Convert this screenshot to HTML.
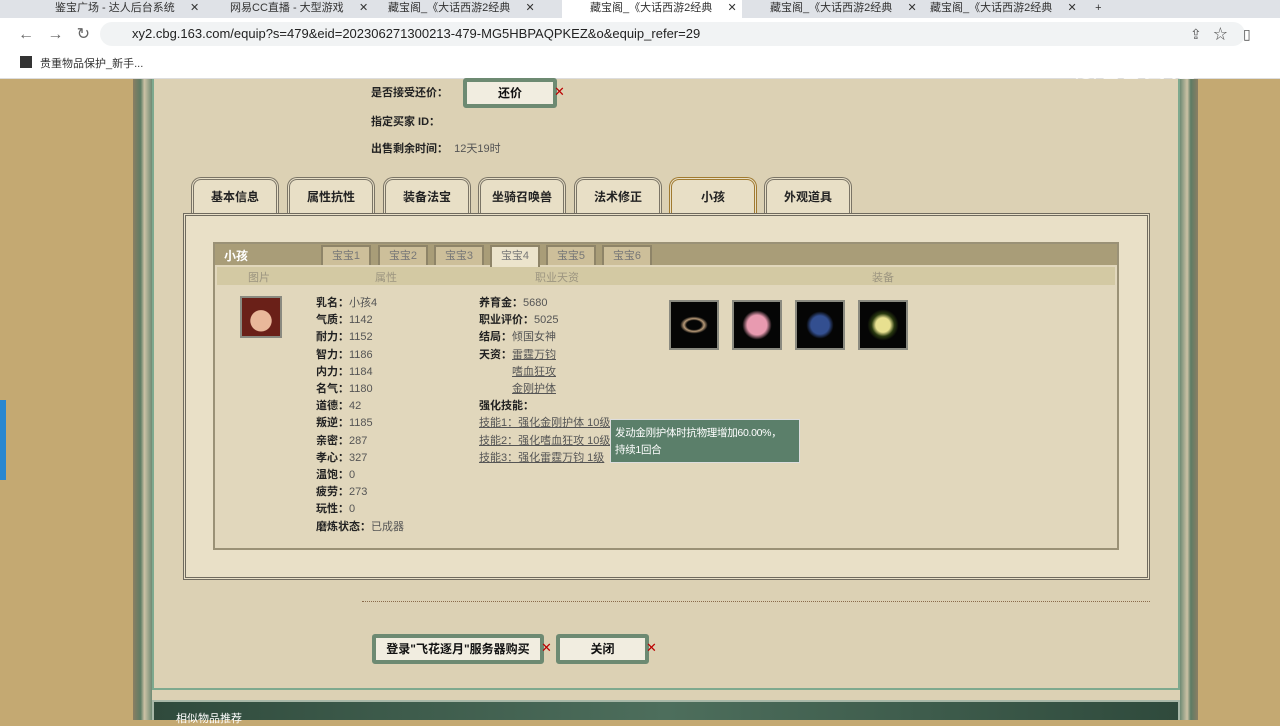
<!DOCTYPE html>
<html><head><meta charset="utf-8"><style>
*{margin:0;padding:0;box-sizing:border-box}
body{width:1280px;height:720px;overflow:hidden;position:relative;font-family:"Liberation Sans","Noto Sans CJK SC",sans-serif;font-size:11px;color:#333;background:#c4a972}
.abs{position:absolute}
.tabbar{left:0;top:0;width:1280px;height:18px;background:#dfe2e7}
.btab{top:2px;height:16px;font-size:11px;color:#333;line-height:12px;padding-left:30px;white-space:nowrap}
.addr{left:0;top:18px;width:1280px;height:30px;background:#fff}
.url{left:100px;top:22px;width:1145px;height:24px;background:#f1f3f4;border-radius:12px;font-size:13px;color:#222;line-height:24px;padding-left:32px}
.bm{left:0;top:48px;width:1280px;height:31px;background:#fff;border-bottom:1px solid #ddd}
.page{left:152px;top:79px;width:1028px;height:641px;background:#dcd1b4}
.tab{top:177px;height:36px;width:88px;border:3px double #7a7466;border-bottom:none;border-radius:10px 10px 0 0;background:#e8dfc6;text-align:center;line-height:34px;font-size:12px;color:#222;font-weight:bold}
.lbl{font-size:11px;color:#222;line-height:17.2px}
.lbl b{color:#222}
.lbl span{color:#555}
.u{text-decoration:underline;color:#666}
.eq{top:300px;width:50px;height:50px;background:#050505;border:2px solid #8a8a80}
.btn{height:30px;background:#f1ede0;border:4px solid #6d8a72;border-radius:3px;text-align:center;line-height:22px;font-size:12px;color:#111;font-weight:bold}
.st{top:245px;height:20px;width:50px;background:#cdbf9a;border:2px solid #8e8468;border-bottom:none;text-align:center;line-height:18px;color:#777;font-size:11px}
</style></head><body>
<div class="abs" style="left:0;top:400px;width:6px;height:80px;background:#2a87cf"></div>
<div class="abs tabbar"></div>
<div class="abs btab" style="left:25px">鉴宝广场 - 达人后台系统 &nbsp;&nbsp;&nbsp;&nbsp;✕</div>
<div class="abs btab" style="left:200px">网易CC直播 - 大型游戏 &nbsp;&nbsp;&nbsp;&nbsp;✕</div>
<div class="abs btab" style="left:358px">藏宝阁_《大话西游2经典 &nbsp;&nbsp;&nbsp;&nbsp;✕</div>
<div class="abs" style="left:562px;top:0;width:180px;height:18px;background:#fff"></div>
<div class="abs btab" style="left:560px">藏宝阁_《大话西游2经典 &nbsp;&nbsp;&nbsp;&nbsp;✕</div>
<div class="abs btab" style="left:740px">藏宝阁_《大话西游2经典 &nbsp;&nbsp;&nbsp;&nbsp;✕</div>
<div class="abs btab" style="left:900px">藏宝阁_《大话西游2经典 &nbsp;&nbsp;&nbsp;&nbsp;✕ &nbsp;&nbsp;&nbsp;&nbsp;&nbsp;+</div>
<div class="abs addr"></div>
<div class="abs" style="left:18px;top:24px;font-size:16px;color:#666">←&nbsp;&nbsp; →&nbsp;&nbsp; ↻</div>
<div class="abs url">xy2.cbg.163.com/equip?s=479&amp;eid=202306271300213-479-MG5HBPAQPKEZ&amp;o&amp;equip_refer=29</div>
<div class="abs" style="left:1190px;top:24px;font-size:14px;color:#555">⇪&nbsp;&nbsp; ☆&nbsp;&nbsp;&nbsp; ▯</div>
<div class="abs bm"></div>
<div class="abs" style="left:20px;top:56px;width:12px;height:12px;background:#333"></div>
<div class="abs" style="left:40px;top:55px;font-size:11px;color:#333">贵重物品保护_新手...</div>
<div class="abs" style="left:1072px;top:50px;font-size:28px;color:#fff;font-weight:bold;opacity:.85">◎CC直播</div>

<div class="abs" style="left:133px;top:79px;width:19px;height:641px;background:linear-gradient(90deg,#8a7e63,#5d7c64 40%,#ccc2a5 60%,#6f8a74)"></div>
<div class="abs" style="left:1180px;top:79px;width:18px;height:641px;background:linear-gradient(90deg,#6f8a74,#ccc2a5 40%,#5d7c64 60%,#8a7e63)"></div>
<div class="abs page"></div>
<div class="abs" style="left:152px;top:79px;width:1028px;height:611px;border:2px solid #7ea98e;border-top:none"></div>

<div class="abs lbl" style="left:371px;top:85px"><b>是否接受还价：</b></div>
<div class="abs btn" style="left:463px;top:78px;width:94px">还价</div>
<div class="abs" style="left:554px;top:84px;color:#b00;font-size:13px">✕</div>
<div class="abs lbl" style="left:371px;top:114px"><b>指定买家 ID：</b></div>
<div class="abs lbl" style="left:371px;top:141px"><b>出售剩余时间：</b><span>&nbsp;&nbsp;12天19时</span></div>

<div class="abs tab" style="left:191px">基本信息</div>
<div class="abs tab" style="left:287px">属性抗性</div>
<div class="abs tab" style="left:383px">装备法宝</div>
<div class="abs tab" style="left:478px">坐骑召唤兽</div>
<div class="abs tab" style="left:574px">法术修正</div>
<div class="abs tab" style="left:669px;border-color:#a07a30">小孩</div>
<div class="abs tab" style="left:764px">外观道具</div>

<div class="abs" style="left:183px;top:213px;width:967px;height:367px;background:#e9e0c7;border:3px double #6f6a5e"></div>
<div class="abs" style="left:213px;top:242px;width:906px;height:308px;background:#e1d7bc;border:2px solid #9a9176"></div>
<div class="abs" style="left:215px;top:244px;width:902px;height:21px;background:#a99d78"></div>
<div class="abs" style="left:224px;top:247px;color:#fff;font-size:12px;font-weight:bold">小孩</div>
<div class="abs st" style="left:321px">宝宝1</div>
<div class="abs st" style="left:378px">宝宝2</div>
<div class="abs st" style="left:434px">宝宝3</div>
<div class="abs st" style="left:490px;background:#ece4cc;height:22px">宝宝4</div>
<div class="abs st" style="left:546px">宝宝5</div>
<div class="abs st" style="left:602px">宝宝6</div>
<div class="abs" style="left:217px;top:267px;width:898px;height:18px;background:#d3c9a3"></div>
<div class="abs" style="left:248px;top:269px;color:#9c9580">图片</div>
<div class="abs" style="left:375px;top:269px;color:#9c9580">属性</div>
<div class="abs" style="left:535px;top:269px;color:#9c9580">职业天资</div>
<div class="abs" style="left:872px;top:269px;color:#9c9580">装备</div>
<div class="abs" style="left:240px;top:296px;width:42px;height:42px;background:radial-gradient(circle at 50% 60%,#e9b89a 35%,#6a2018 37%);border:2px solid #8a8a80"></div>

<div class="abs lbl" style="left:316px;top:295px">
<b>乳名：</b><span>小孩4</span><br><b>气质：</b><span>1142</span><br><b>耐力：</b><span>1152</span><br><b>智力：</b><span>1186</span><br><b>内力：</b><span>1184</span><br><b>名气：</b><span>1180</span><br><b>道德：</b><span>42</span><br><b>叛逆：</b><span>1185</span><br><b>亲密：</b><span>287</span><br><b>孝心：</b><span>327</span><br><b>温饱：</b><span>0</span><br><b>疲劳：</b><span>273</span><br><b>玩性：</b><span>0</span><br><b>磨炼状态：</b><span>已成器</span></div>
<div class="abs lbl" style="left:479px;top:295px">
<b>养育金：</b><span>5680</span><br><b>职业评价：</b><span>5025</span><br><b>结局：</b><span>倾国女神</span><br><b>天资：</b><span class="u">雷霆万钧</span><br><span style="display:inline-block;width:33px"></span><span class="u">嗜血狂攻</span><br><span style="display:inline-block;width:33px"></span><span class="u">金刚护体</span><br><b>强化技能：</b><br><span class="u">技能1：强化金刚护体 10级</span><br><span class="u">技能2：强化嗜血狂攻 10级</span><br><span class="u">技能3：强化雷霆万钧 1级</span></div>
<div class="abs" style="left:610px;top:419px;width:190px;height:44px;background:#5b7f6a;border:1px solid #ddd;color:#fff;font-size:10.5px;letter-spacing:-0.3px;line-height:17px;padding:5px 4px;white-space:nowrap">发动金刚护体时抗物理增加60.00%，<br>持续1回合</div>

<div class="abs eq" style="left:669px;background:radial-gradient(ellipse 40% 25%,#050505 40%,#b89a78 55%,#050505 75%)"></div>
<div class="abs eq" style="left:732px;background:radial-gradient(circle,#e89ab0 30%,#050505 45%)"></div>
<div class="abs eq" style="left:795px;background:radial-gradient(circle,#334f90 28%,#050505 42%)"></div>
<div class="abs eq" style="left:858px;background:radial-gradient(circle,#e8e090 22%,#2a3a10 35%,#050505 48%)"></div>

<div class="abs" style="left:362px;top:601px;width:788px;border-top:1px dotted #8a6a4a"></div>
<div class="abs btn" style="left:372px;top:634px;width:172px">登录"飞花逐月"服务器购买</div>
<div class="abs" style="left:541px;top:640px;color:#b00;font-size:13px">✕</div>
<div class="abs btn" style="left:556px;top:634px;width:93px">关闭</div>
<div class="abs" style="left:646px;top:640px;color:#b00;font-size:13px">✕</div>

<div class="abs" style="left:152px;top:700px;width:1028px;height:20px;background:linear-gradient(90deg,#2f4a3c,#4d6e5c 50%,#2f4a3c);border:2px solid #a8b8a8;border-bottom:none"></div>
<div class="abs" style="left:176px;top:710px;color:#fff;font-size:11px">相似物品推荐</div>
</body></html>
